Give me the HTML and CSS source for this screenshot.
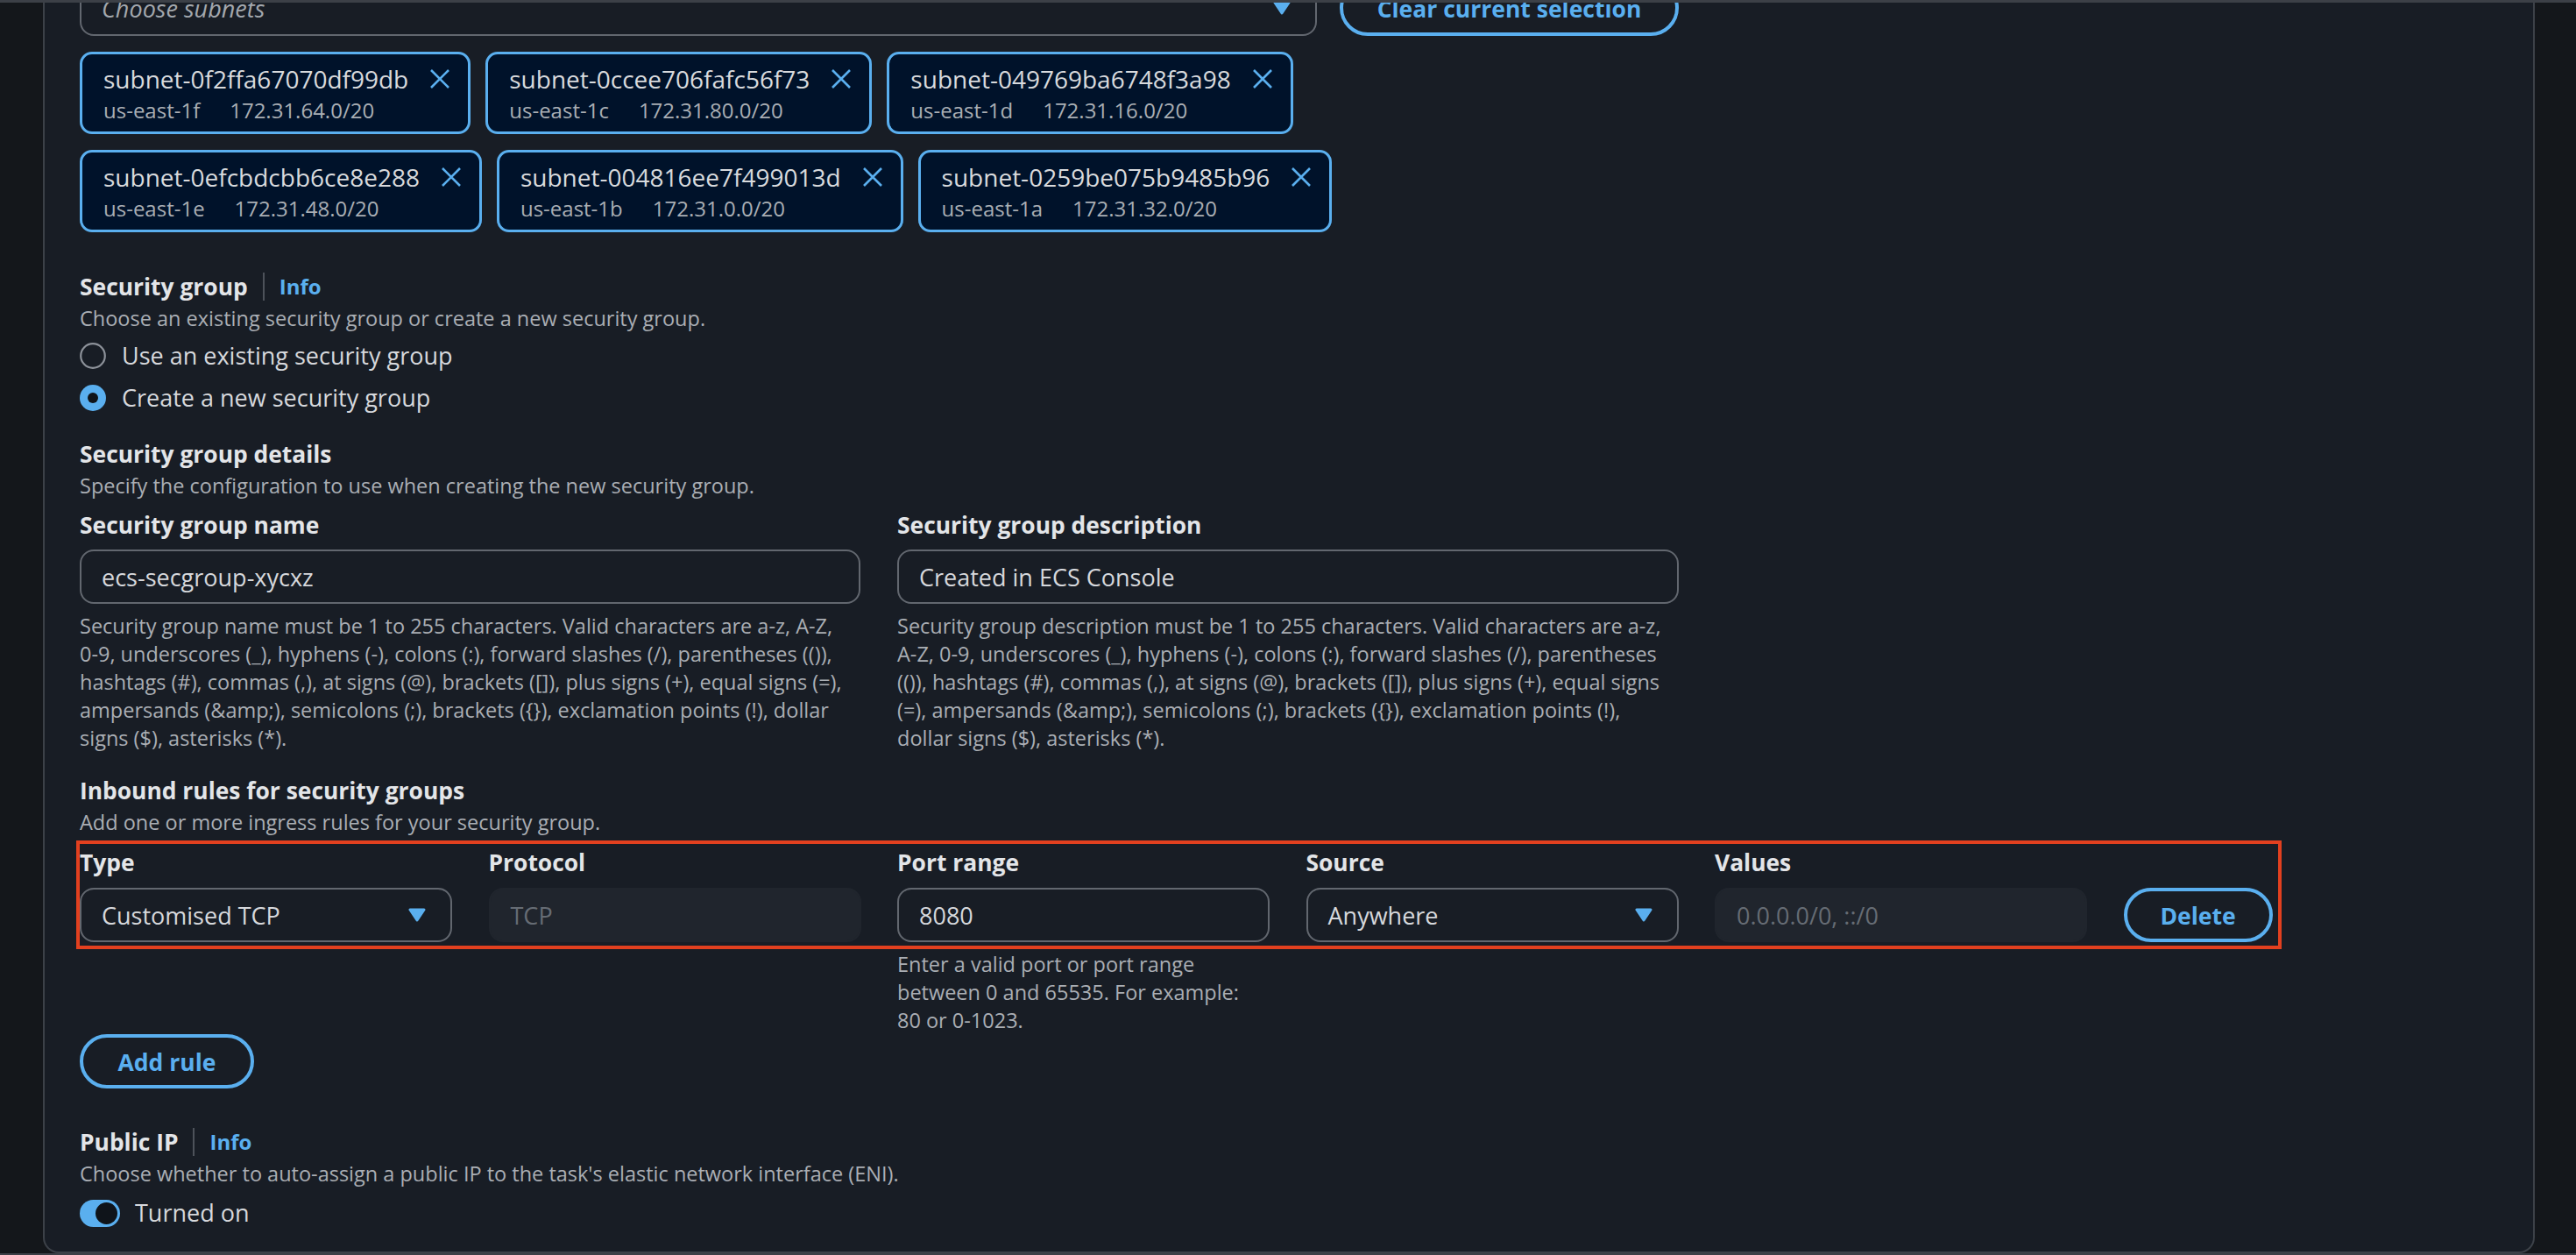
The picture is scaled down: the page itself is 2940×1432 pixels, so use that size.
FILE: index.html
```html
<!DOCTYPE html>
<html lang="en">
<head>
<meta charset="utf-8">
<title>Networking - Security group</title>
<link rel="stylesheet" href="styles.css">
</head>
<body>
<div class="frame">
  <div class="panel">
    <div class="form">
      <div class="subnet-row">
        <div class="select wide">
          <span class="placeholder">Choose subnets</span>
          <svg class="caret" width="20" height="16" viewBox="0 0 20 16"><path d="M2 2 L18 2 L10 14 Z" fill="#5aafef" stroke="#5aafef" stroke-width="3" stroke-linejoin="round"/></svg>
        </div>
        <button class="btn clear">Clear current selection</button>
      </div>

      <div class="tokens">
        <div class="chip">
          <div class="chip-text"><div class="chip-title">subnet-0f2ffa67070df99db</div><div class="chip-sub"><span>us-east-1f</span><span>172.31.64.0/20</span></div></div>
          <svg class="x" width="24" height="24" viewBox="0 0 24 24"><path d="M2 2 L22 22 M22 2 L2 22" stroke="#5aafef" stroke-width="2.6" fill="none"/></svg>
        </div>
        <div class="chip">
          <div class="chip-text"><div class="chip-title">subnet-0ccee706fafc56f73</div><div class="chip-sub"><span>us-east-1c</span><span>172.31.80.0/20</span></div></div>
          <svg class="x" width="24" height="24" viewBox="0 0 24 24"><path d="M2 2 L22 22 M22 2 L2 22" stroke="#5aafef" stroke-width="2.6" fill="none"/></svg>
        </div>
        <div class="chip">
          <div class="chip-text"><div class="chip-title">subnet-049769ba6748f3a98</div><div class="chip-sub"><span>us-east-1d</span><span>172.31.16.0/20</span></div></div>
          <svg class="x" width="24" height="24" viewBox="0 0 24 24"><path d="M2 2 L22 22 M22 2 L2 22" stroke="#5aafef" stroke-width="2.6" fill="none"/></svg>
        </div>
        <div class="chip">
          <div class="chip-text"><div class="chip-title">subnet-0efcbdcbb6ce8e288</div><div class="chip-sub"><span>us-east-1e</span><span>172.31.48.0/20</span></div></div>
          <svg class="x" width="24" height="24" viewBox="0 0 24 24"><path d="M2 2 L22 22 M22 2 L2 22" stroke="#5aafef" stroke-width="2.6" fill="none"/></svg>
        </div>
        <div class="chip">
          <div class="chip-text"><div class="chip-title">subnet-004816ee7f499013d</div><div class="chip-sub"><span>us-east-1b</span><span>172.31.0.0/20</span></div></div>
          <svg class="x" width="24" height="24" viewBox="0 0 24 24"><path d="M2 2 L22 22 M22 2 L2 22" stroke="#5aafef" stroke-width="2.6" fill="none"/></svg>
        </div>
        <div class="chip">
          <div class="chip-text"><div class="chip-title">subnet-0259be075b9485b96</div><div class="chip-sub"><span>us-east-1a</span><span>172.31.32.0/20</span></div></div>
          <svg class="x" width="24" height="24" viewBox="0 0 24 24"><path d="M2 2 L22 22 M22 2 L2 22" stroke="#5aafef" stroke-width="2.6" fill="none"/></svg>
        </div>
      </div>

      <div class="section sg">
        <div class="heading"><span class="label">Security group</span><span class="divider"></span><a class="info">Info</a></div>
        <div class="desc">Choose an existing security group or create a new security group.</div>
        <div class="radios">
          <div class="radio-row">
            <svg width="30" height="30" viewBox="0 0 30 30"><circle cx="15" cy="15" r="13.8" fill="none" stroke="#8c9199" stroke-width="2.2"/></svg>
            <span>Use an existing security group</span>
          </div>
          <div class="radio-row">
            <svg width="30" height="30" viewBox="0 0 30 30"><circle cx="15" cy="15" r="15" fill="#5aafef"/><circle cx="15" cy="15" r="6" fill="#0f141a"/></svg>
            <span>Create a new security group</span>
          </div>
        </div>
      </div>

      <div class="section details">
        <div class="label">Security group details</div>
        <div class="desc">Specify the configuration to use when creating the new security group.</div>
        <div class="two-col">
          <div class="field">
            <div class="label">Security group name</div>
            <div class="input">ecs-secgroup-xycxz</div>
            <div class="desc constraint">Security group name must be 1 to 255 characters. Valid characters are a-z, A-Z,<br>0-9, underscores (_), hyphens (-), colons (:), forward slashes (/), parentheses (()),<br>hashtags (#), commas (,), at signs (@), brackets ([]), plus signs (+), equal signs (=),<br>ampersands (&amp;amp;), semicolons (;), brackets ({}), exclamation points (!), dollar<br>signs ($), asterisks (*).</div>
          </div>
          <div class="field">
            <div class="label">Security group description</div>
            <div class="input">Created in ECS Console</div>
            <div class="desc constraint">Security group description must be 1 to 255 characters. Valid characters are a-z,<br>A-Z, 0-9, underscores (_), hyphens (-), colons (:), forward slashes (/), parentheses<br>(()), hashtags (#), commas (,), at signs (@), brackets ([]), plus signs (+), equal signs<br>(=), ampersands (&amp;amp;), semicolons (;), brackets ({}), exclamation points (!),<br>dollar signs ($), asterisks (*).</div>
          </div>
        </div>
      </div>

      <div class="section inbound">
        <div class="label">Inbound rules for security groups</div>
        <div class="desc">Add one or more ingress rules for your security group.</div>
      </div>
    </div>

    <div class="rules-box">
      <div class="rules-grid">
        <div class="label">Type</div>
        <div class="label">Protocol</div>
        <div class="label">Port range</div>
        <div class="label">Source</div>
        <div class="label">Values</div>
        <div></div>
        <div class="select">
          <span>Customised TCP</span>
          <svg class="caret" width="20" height="16" viewBox="0 0 20 16"><path d="M2 2 L18 2 L10 14 Z" fill="#5aafef" stroke="#5aafef" stroke-width="3" stroke-linejoin="round"/></svg>
        </div>
        <div class="input disabled">TCP</div>
        <div class="input">8080</div>
        <div class="select">
          <span>Anywhere</span>
          <svg class="caret" width="20" height="16" viewBox="0 0 20 16"><path d="M2 2 L18 2 L10 14 Z" fill="#5aafef" stroke="#5aafef" stroke-width="3" stroke-linejoin="round"/></svg>
        </div>
        <div class="input disabled">0.0.0.0/0, ::/0</div>
        <button class="btn delete">Delete</button>
      </div>
    </div>
    <div class="hint-grid">
      <div></div><div></div>
      <div class="desc hint">Enter a valid port or port range<br>between 0 and 65535. For example:<br>80 or 0-1023.</div>
    </div>

    <button class="btn add">Add rule</button>

    <div class="section public">
      <div class="heading"><span class="label">Public IP</span><span class="divider"></span><a class="info">Info</a></div>
      <div class="desc">Choose whether to auto-assign a public IP to the task's elastic network interface (ENI).</div>
      <div class="toggle-row">
        <span class="toggle"><span class="knob"></span></span>
        <span>Turned on</span>
      </div>
    </div>
  </div>
</div>
</body>
</html>
```
FILE: styles.css
```css
* { box-sizing: border-box; }
html, body { margin: 0; padding: 0; }
body {
  width: 2940px;
  height: 1432px;
  overflow: hidden;
  background: #14171b;
  font-family: "Open Sans", "Noto Sans", sans-serif;
  font-size: 27px;
  line-height: 40px;
  color: #d6d8dc;
}
.frame {
  height: 1432px;
  border-top: 3px solid #3c4047;
  border-bottom: 2px solid #3c4047;
  padding: 0 47px 0 49px;
  overflow: hidden;
}
.panel {
  height: 1427px;
  background: #181d25;
  border: 2px solid #3c4148;
  border-top: none;
  border-radius: 0 0 18px 18px;
  padding: 0 40px;
  overflow: hidden;
}
.form { width: 1825px; margin-top: -26px; }

.subnet-row { display: flex; align-items: flex-end; gap: 26px; }
.select {
  height: 62px;
  border: 2px solid #62676f;
  border-radius: 16px;
  display: flex;
  align-items: center;
  justify-content: space-between;
  padding: 2px 28px 0 23px;
  color: #d6d8dc;
}
.select.wide { width: 1412px; height: 64px; }
.placeholder { font-style: italic; color: #a3a8ae; }
.caret { display: block; margin-top: -2px; }

.btn {
  font-family: inherit;
  font-weight: 700;
  font-size: 26.5px;
  color: #5aafef;
  background: transparent;
  border: 4px solid #5aafef;
  border-radius: 32px;
  height: 62px;
  padding: 2px 0 0;
  cursor: pointer;
}
.btn.clear { width: 387px; height: 64px; }
.btn.add { width: 199px; display: block; margin-top: 0; }
.btn.delete { width: 170px; }

.tokens {
  display: flex;
  flex-wrap: wrap;
  gap: 18px 17px;
  margin-top: 18px;
}
.chip {
  display: flex;
  align-items: flex-start;
  gap: 24px;
  background: #00122a;
  border: 3px solid #5aafef;
  border-radius: 14px;
  padding: 8px 20px 8px 24px;
}
.chip-title { font-size: 28px; line-height: 40px; color: #d8dadd; }
.chip-sub { display: flex; gap: 34px; font-size: 24px; line-height: 32px; color: #a9aeb4; }
.chip .x { margin-top: 8px; display: block; }

.label { font-weight: 700; font-size: 26.4px; line-height: 40px; color: #e3e5e8; }
.desc { font-size: 23.5px; line-height: 32px; color: #aaaeb4; }
.heading { display: flex; align-items: center; }
.divider { width: 2px; height: 32px; background: #4d525a; margin: 0 17px; }
.info { font-weight: 700; font-size: 24px; color: #5aafef; }

.sg { margin-top: 42px; }
.radios { margin-top: 7px; display: flex; flex-direction: column; gap: 8px; }
.radio-row { display: flex; align-items: center; gap: 18px; height: 40px; }
.radio-row svg { display: block; }

.details { margin-top: 24px; }
.two-col {
  display: grid;
  grid-template-columns: 891px 892px;
  column-gap: 42px;
  margin-top: 9px;
}
.input {
  height: 62px;
  border: 2px solid #62676f;
  border-radius: 16px;
  display: flex;
  align-items: center;
  padding: 2px 23px 0;
  color: #d6d8dc;
}
.field .input { margin-top: 8px; }
.constraint { margin-top: 9px; white-space: nowrap; }
.input.disabled { background: #20252d; border-color: #20252d; color: #666c74; }

.inbound { margin-top: 24px; }

.rules-box {
  width: 2509px;
  margin-top: 9px;
  padding: 0 4px 4px 0;
  outline: 4px solid #e2401f;
}
.rules-grid, .hint-grid {
  display: grid;
  grid-template-columns: 425px 425px 425px 425px 425px 172px;
  column-gap: 41.5px;
}
.rules-grid { row-gap: 9px; }
.rules-grid .label { padding-top: 1px; }
.hint-grid { margin-top: 5px; }
.hint { white-space: nowrap; }

.public { margin-top: 41px; }
.toggle-row { display: flex; align-items: center; gap: 17px; margin-top: 9px; height: 40px; }
.toggle {
  width: 46px;
  height: 31px;
  border-radius: 16px;
  background: #5aafef;
  display: flex;
  align-items: center;
  justify-content: flex-end;
  padding: 0 3px;
}
.knob { width: 25px; height: 25px; border-radius: 50%; background: #0f141a; display: block; }
```
